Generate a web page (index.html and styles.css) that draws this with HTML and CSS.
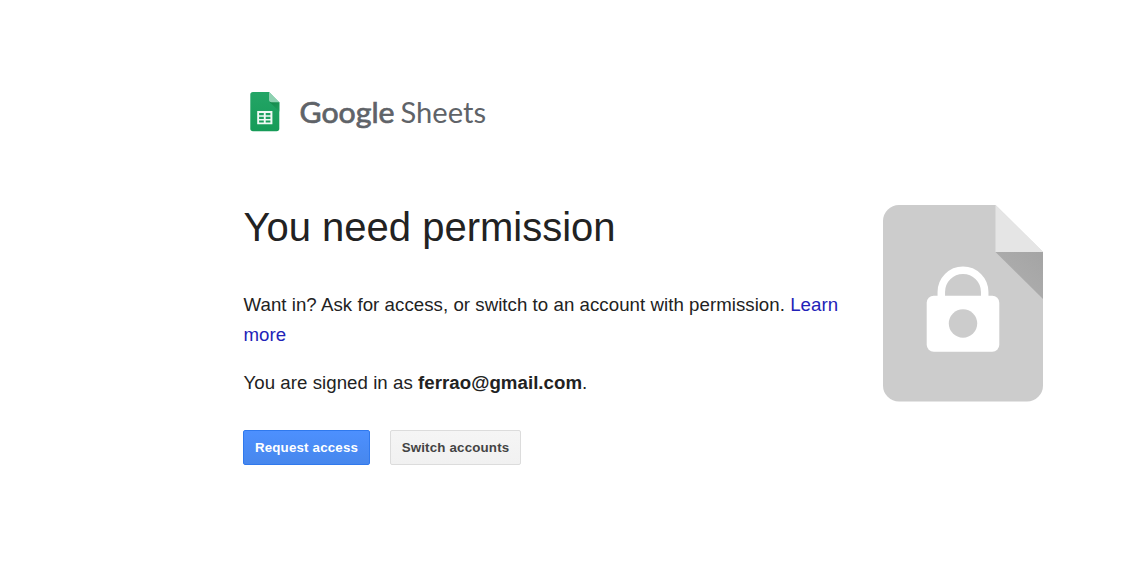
FILE: index.html
```html
<!DOCTYPE html>
<html lang="en">
<head>
<meta charset="utf-8">
<title>Google Sheets - Access denied</title>
<link rel="stylesheet" href="styles.css">
</head>
<body>
<main class="page">
  <section class="content">
    <svg class="brand" width="246" height="44" viewBox="0 0 246 44" role="img" aria-label="Google Sheets">
      <defs>
        <linearGradient id="sheet" x2="0" y2="1"><stop stop-color="#23a566"/><stop offset="1" stop-color="#169b58"/></linearGradient>
        <linearGradient id="shade" x2="1" y2="1"><stop stop-color="#148548"/><stop offset="1" stop-color="#1f9f5e"/></linearGradient>
      </defs>
      <path fill="url(#sheet)" d="M10 2h16l10.3 10.5v26a2.7 2.7 0 0 1-2.7 2.7H10a2.7 2.7 0 0 1-2.7-2.7V4.700A2.700 2.700 0 0 1 10 2z"/>
      <path fill="url(#shade)" d="M26.600 11.900 36.300 21.500v-9.200z"/>
      <path fill="#8ed1b1" d="M26 2v7.600a2.700 2.700 0 0 0 2.700 2.700h7.600z"/>
      <path fill="#f1f9f5" fill-rule="evenodd" d="M14.200 21.100h15.200v13.200H14.200zM16.100 23.100v2.100h4.700v-2.100zm6.600 0v2.100h4.700v-2.100zm-6.600 3.700v2.100h4.700v-2.100zm6.600 0v2.100h4.700v-2.100zm-6.600 3.700v2h4.700v-2zm6.600 0v2h4.700v-2z"/>
      <text class="brand-google" x="56.500" y="32.500" textLength="95" lengthAdjust="spacingAndGlyphs">Google</text>
      <text class="brand-product" x="157.500" y="32.500" textLength="85.500" lengthAdjust="spacingAndGlyphs">Sheets</text>
    </svg>
    <h1 class="title">You need permission</h1>
    <p class="message">Want in? Ask for access, or switch to an account with permission. <a class="link" href="#">Learn more</a></p>
    <p class="message account">You are signed in as <b class="email">ferrao@gmail.com</b>.</p>
    <div class="actions">
      <button class="button button-primary">Request access</button>
      <button class="button button-default">Switch accounts</button>
    </div>
  </section>
  <svg class="locked-file" width="160" height="197" viewBox="0 0 160 197" aria-hidden="true">
    <defs><linearGradient id="fold" x1="0" y1="1" x2="1" y2="0"><stop stop-color="#b1b1b1"/><stop offset="1" stop-color="#a4a4a4"/></linearGradient></defs>
    <path fill="#ccc" d="M16 0h96.500L160 47v133.500a16 16 0 0 1-16 16H16a16 16 0 0 1-16-16V16A16 16 0 0 1 16 0z"/>
    <path fill="#e5e5e5" d="M112.500 0v47H160z"/>
    <path fill="url(#fold)" d="M112.500 47H160v47z"/>
    <path fill="none" stroke="#fff" stroke-width="7.500" d="M58.300 92V87a21.700 21.700 0 0 1 43.400 0v5"/>
    <rect x="43.700" y="90.700" width="72.600" height="56.100" rx="7" fill="#fff"/>
    <circle cx="80" cy="118.500" r="14.200" fill="#ccc"/>
  </svg>
</main>
</body>
</html>
```
FILE: styles.css
```css
body {
  margin: 0;
  background: #fff;
  color: #222;
  font-family: "Liberation Sans", Arial, sans-serif;
}

.page {
  display: flex;
  align-items: flex-start;
  width: 800px;
  padding: 90px 0 0 243px;
}

.content {
  width: 600px;
  margin-right: 40px;
}

.brand {
  display: block;
}

.brand-google,
.brand-product {
  font-family: Lato, sans-serif;
  font-size: 29px;
  fill: #5f6368;
}

.brand-google {
  stroke: #5f6368;
  stroke-width: 0.7px;
}

.title {
  margin: 70px 0 0;
  padding-left: 0.5px;
  font-size: 40px;
  font-weight: 400;
  line-height: 46px;
  white-space: nowrap;
}

.message {
  margin: 40px 0 0;
  padding-left: 0.5px;
  font-size: 18.667px;
  line-height: 30px;
  letter-spacing: 0.045px;
}

.message.account {
  margin-top: 18px;
}

.link {
  color: #2222b8;
  text-decoration: none;
}

.actions {
  display: flex;
  gap: 20px;
  margin-top: 32px;
}

.button {
  box-sizing: border-box;
  height: 35px;
  padding: 0;
  border: 1px solid;
  border-radius: 2px;
  font: bold 13.333px "Liberation Sans", Arial, sans-serif;
  letter-spacing: 0.17px;
}

.button-primary {
  width: 127px;
  border-color: #3079ed;
  background: linear-gradient(#4d90fe, #4787ed);
  color: #fff;
}

.button-default {
  width: 131px;
  border-color: #dcdcdc;
  background: linear-gradient(#f5f5f5, #f1f1f1);
  color: #444;
}

.locked-file {
  flex: none;
  margin-top: 115px;
}
```
